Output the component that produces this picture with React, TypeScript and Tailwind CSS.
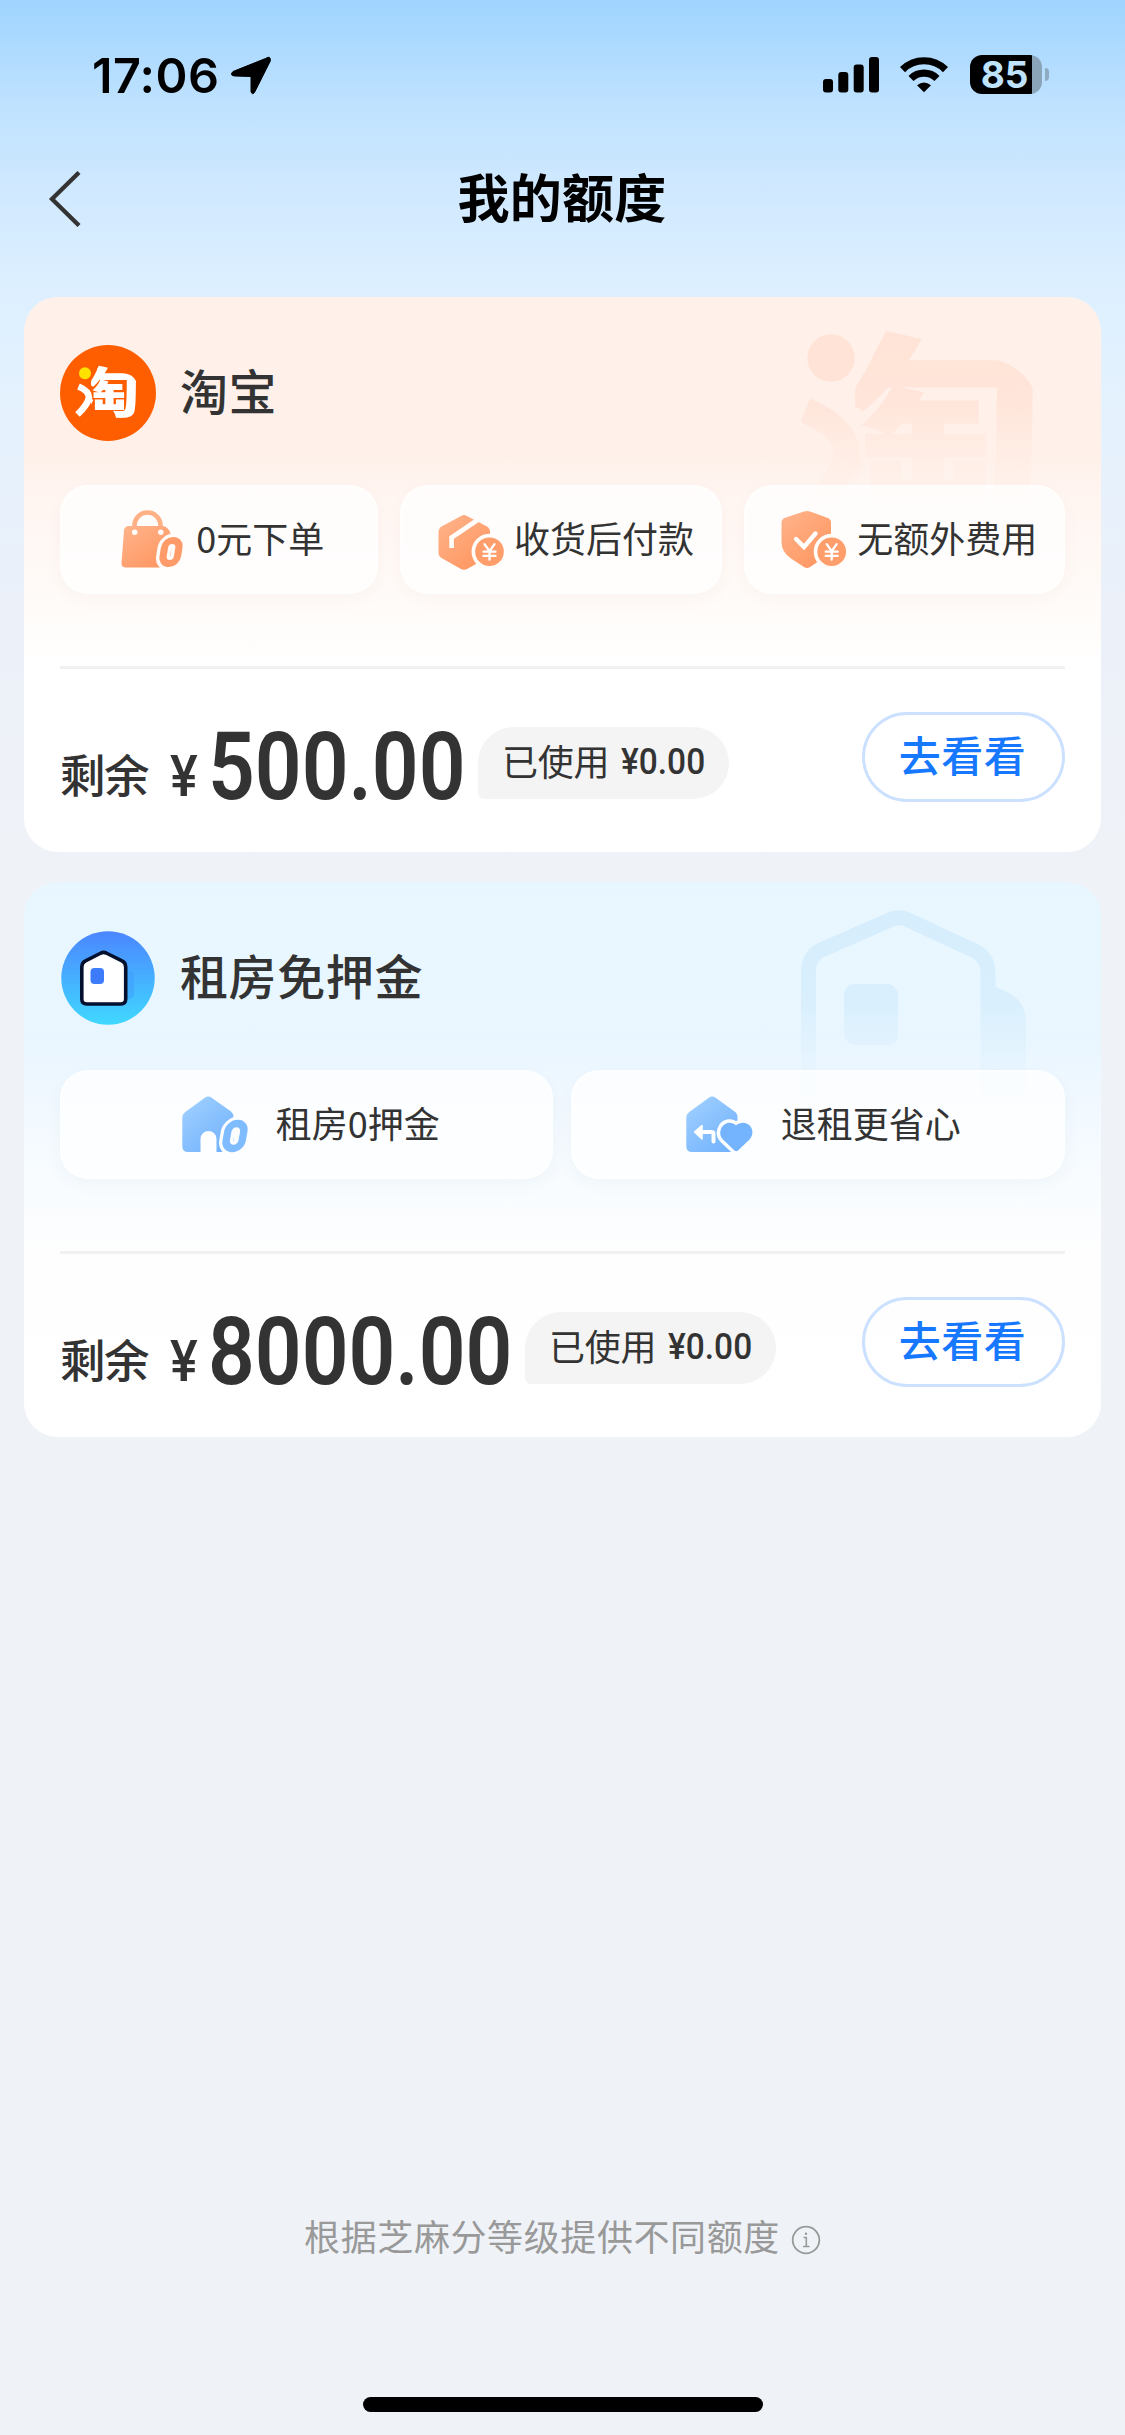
import React from 'react';
import { clsx } from 'clsx';

// Shared between the round logo and the big faded mark on the card
const TaoGlyph = ({ id, fill, dotFill }: { id: string; fill: string; dotFill: string }) => (
  <g>
    <clipPath id={id}>
      <path d="M37 10H62V28Q77.500 29 78 45V67Q78 73 72 73H31V36L34 31L37 25Z" />
    </clipPath>
    <g clipPath={`url(#${id})`}>
      <text x="10.1" y="67.7" transform="scale(1.24 1)" fontSize="54" fontWeight="900" fill={fill} fontFamily='"Noto Sans CJK SC", sans-serif'>淘</text>
    </g>
    <circle cx="25" cy="28.3" r="6" fill={dotFill} />
    <path d="M18.500 41.500Q29 46 29 52.500Q27.500 60 17.500 69.500" fill="none" stroke={fill} strokeWidth="6.500" strokeLinejoin="round" />
  </g>
);

const TaobaoLogo = () => (
  <svg viewBox="0 0 96 96" className="w-24 h-24 shrink-0">
    <circle cx="48" cy="48" r="48" fill="#ff5e00" />
    <TaoGlyph id="taoLogo" fill="#fff" dotFill="#ffe200" />
  </svg>
);

const RentLogo = () => (
  <svg viewBox="0 0 96 96" className="w-24 h-24 shrink-0">
    <defs>
      <linearGradient id="rentLogo" x1="0" y1="0" x2="0" y2="1">
        <stop offset="0" stopColor="#4b86ff" />
        <stop offset="1" stopColor="#40d8ff" />
      </linearGradient>
    </defs>
    <circle cx="48" cy="48" r="46.7" fill="url(#rentLogo)" />
    <rect x="64" y="41" width="10" height="28" rx="5" fill="#3d9cfb" opacity="0.5" />
    <path d="M21.8 37Q21.8 32.5 25.5 30.8L41 23Q43.6 21.8 46.2 23L62 30.8Q65.7 32.5 65.7 37V69Q65.7 74 60.7 74H26.8Q21.8 74 21.8 69Z" fill="#fff" stroke="#03102e" strokeWidth="3.6" />
    <rect x="30.5" y="38" width="13.5" height="16" rx="4" fill="#3c7cfa" />
  </svg>
);

const TaobaoMark = () => (
  <svg viewBox="0 0 96 96" className="absolute left-[708px] top-[-51px] w-[380px] h-[380px] overflow-visible">
    <defs>
      <linearGradient id="taoFade" gradientUnits="userSpaceOnUse" x1="0" y1="20" x2="0" y2="70">
        <stop offset="0" stopColor="#ffe3d6" />
        <stop offset="0.4" stopColor="#ffe5da" />
        <stop offset="0.9" stopColor="#fff1ea" stopOpacity="0.4" />
        <stop offset="1" stopColor="#fff5f1" stopOpacity="0" />
      </linearGradient>
    </defs>
    <TaoGlyph id="taoMark" fill="url(#taoFade)" dotFill="#ffe3d6" />
  </svg>
);

const RentMark = () => (
  <svg viewBox="0 0 240 200" className="absolute left-[769px] top-[22px] w-[240px] h-[200px]">
    <defs>
      <linearGradient id="rentFade" gradientUnits="userSpaceOnUse" x1="0" y1="0" x2="0" y2="200">
        <stop offset="0" stopColor="#d6edfd" />
        <stop offset="0.5" stopColor="#d9effd" />
        <stop offset="1" stopColor="#eaf6ff" stopOpacity="0.4" />
      </linearGradient>
    </defs>
    <path d="M15.5 200V68Q15.5 52 28 46L98 15.500Q106 12 114 15.500L182 47Q195 53 195 70V200" fill="none" stroke="url(#rentFade)" strokeWidth="15" />
    <path d="M202 83Q233 92 233 118V200H202Z" fill="url(#rentFade)" />
    <rect x="51" y="80" width="54" height="61" rx="11" fill="url(#rentFade)" />
  </svg>
);

const OrangeFill = ({ id }: { id: string }) => (
  <defs>
    <linearGradient id={id} x1="0" y1="0" x2="0.8" y2="1">
      <stop offset="0" stopColor="#ffb48c" />
      <stop offset="1" stopColor="#ff9660" />
    </linearGradient>
  </defs>
);

const BlueFill = ({ id }: { id: string }) => (
  <defs>
    <linearGradient id={id} x1="0" y1="0" x2="0.8" y2="1">
      <stop offset="0" stopColor="#a3d2ff" />
      <stop offset="1" stopColor="#72b2fd" />
    </linearGradient>
  </defs>
);

const Coin = ({ cx, cy }: { cx: number; cy: number }) => (
  <g>
    <circle cx={cx} cy={cy} r="18" fill="#fffcfa" />
    <circle cx={cx} cy={cy} r="14.300" fill="#ff9e6b" />
    <path d={`M${cx - 5} ${cy - 7.5}l5 7l5 -7M${cx} ${cy - 0.5}v8.500M${cx - 6} ${cy}h12M${cx - 6} ${cy + 4.2}h12`} fill="none" stroke="#fff" strokeWidth="2.300" strokeLinecap="round" />
  </g>
);

const BagIcon = () => (
  <svg viewBox="0 0 62 60" className="w-[62px] h-[60px]">
    <OrangeFill id="bag" />
    <path d="M13.500 17V15.500a13 13 0 0 1 26 0V17" fill="none" stroke="#ffb084" strokeWidth="4.600" />
    <path d="M8 16H42Q48 17 49.500 24L51 57.500H5Q0.300 57.500 0.500 53L3 20.500Q3.500 16 8 16Z" fill="url(#bag)" />
    <circle cx="13.700" cy="22.300" r="2.700" fill="#fff" />
    <circle cx="39.800" cy="22.300" r="2.700" fill="#fff" />
    <g transform="translate(50 42) skewX(-9)" fill="none">
      <rect x="-7.200" y="-11.500" width="14.400" height="23" rx="7.200" stroke="#fffcfa" strokeWidth="14" />
      <rect x="-7.200" y="-11.500" width="14.400" height="23" rx="7.200" stroke="#ff9b68" strokeWidth="7.200" />
    </g>
  </svg>
);

const BoxIcon = () => (
  <svg viewBox="0 0 68 60" className="w-[68px] h-[60px]">
    <OrangeFill id="box" />
    <path d="M23 6Q26 4 29 6L49 16.500Q52 18.500 52 22V42Q52 46 49 48L29 59Q26 60.500 23 59L3.500 48Q0.500 46 0.500 43V22Q0.500 18.500 3.500 16.500Z" fill="url(#box)" />
    <path d="M13.600 38V27.500L41 9" fill="none" stroke="#fffcfa" strokeWidth="4.600" />
    <Coin cx={51.5} cy={41.7} />
  </svg>
);

const ShieldIcon = () => (
  <svg viewBox="0 0 68 60" className="w-[68px] h-[60px]">
    <OrangeFill id="shield" />
    <path d="M23 1.500Q26 0.300 29 1.500L47 8Q50 9.500 50 12.500V32Q50 43 41 49L29 57Q26 58.800 23 57L10 48.500Q0.500 42 0.500 32V12.500Q0.500 9.500 3.500 8Z" fill="url(#shield)" />
    <path d="M15 29l8 8L34.500 23.500" fill="none" stroke="#fff" strokeWidth="4.300" strokeLinecap="round" />
    <Coin cx={50.7} cy={41.7} />
  </svg>
);

const HouseZeroIcon = () => (
  <svg viewBox="0 0 68 58" className="w-[68px] h-[58px]">
    <BlueFill id="houseZero" />
    <path d="M22.500 2Q26.300 -0.800 30 2L49 15.500Q51.500 17.500 51.500 21V56H34.500V43a8 8 0 0 0 -16 0V56H6Q0.300 56 0.300 50V22Q0.300 18.500 3 16.300Z" fill="url(#houseZero)" />
    <g transform="translate(53 40) skewX(-10)" fill="none">
      <rect x="-8" y="-12.500" width="16" height="25" rx="8" stroke="#fbfdff" strokeWidth="14" />
      <rect x="-8" y="-12.500" width="16" height="25" rx="8" stroke="#7fbbff" strokeWidth="7.400" />
    </g>
  </svg>
);

const HouseHeartIcon = () => (
  <svg viewBox="0 0 68 58" className="w-[68px] h-[58px]">
    <BlueFill id="houseHeart" />
    <path d="M22.500 2Q26.300 -0.800 30 2L48.500 15.500Q51.500 17.500 51.500 21V56H6Q0.300 56 0.300 50V22Q0.300 18.500 3 16.300Z" fill="url(#houseHeart)" />
    <path d="M14 36H25.500Q27.500 36 27.500 38V45.500" fill="none" stroke="#fff" strokeWidth="4" strokeLinecap="round" />
    <path d="M8.500 36L16 29.500V43Z" fill="#fff" stroke="#fff" strokeWidth="1.500" strokeLinejoin="round" />
    <path
      d="M50 29.500C45.500 25 39 26.300 36 31C33 36 34 40.500 37.500 44L48.500 54.500Q50.300 56 52 54.500L63 44C67 40 67.500 35 64.500 30.500C61 26 54.500 25.500 50 29.500Z"
      fill="#74b4ff"
      stroke="#fbfdff"
      strokeWidth="7"
      paintOrder="stroke"
    />
  </svg>
);

interface Feature {
  label: string;
  icon: React.ReactNode;
  gap: string;
}

interface QuotaCardProps {
  title: string;
  logo: React.ReactNode;
  mark: React.ReactNode;
  background: string;
  shadow: string;
  features: Feature[];
  featureGap: string;
  amount: string;
  amountWidth: string;
}

const QuotaCard: React.FC<QuotaCardProps> = ({ title, logo, mark, background, shadow, features, featureGap, amount, amountWidth }) => (
  <section className={clsx('relative h-[555px] rounded-[34px] px-9 pt-12', background)}>
    {mark}
    <div className="relative flex items-center h-24">
      {logo}
      <h2 className="ml-6 text-[48px] leading-[60px] tracking-[0.6px] font-medium text-[#333] -mt-2">{title}</h2>
    </div>

    <div className={clsx('relative flex mt-11', featureGap)}>
      {features.map((item) => (
        <div
          key={item.label}
          className={clsx('flex-1 h-[109px] rounded-[28px] bg-white/75 border-2 border-white/40 flex items-center justify-center', item.gap, shadow)}
        >
          {item.icon}
          <span className="text-[36px] leading-[48px] text-[#333] whitespace-nowrap -mt-[5px]">{item.label}</span>
        </div>
      ))}
    </div>

    <div className="h-[3px] bg-[#f1f1f3] mt-[72px]" />

    <div className="flex items-start text-[#333]">
      <span className="mt-[76px] w-[100px] text-[45.5px] leading-[56px] tracking-[-1.5px] font-medium whitespace-nowrap">剩余</span>
      <span className="mt-[77px] ml-[10px] w-[33px] font-['Roboto'] font-medium text-[58px] leading-[60px] origin-left scale-x-[0.9]">¥</span>
      <span className={clsx('mt-[50px] ml-[5px]', amountWidth)}>
        <span className="inline-block origin-left scale-x-[0.863] font-['Roboto'] font-semibold text-[95px] leading-[95px]">{amount}</span>
      </span>
      <div className="mt-[58px] h-[72px] w-[251px] pl-[24px] flex items-center rounded-[36px] rounded-bl-[6px] bg-[#f4f4f4] text-[36px] whitespace-nowrap">
        <span className="tracking-[-0.3px] -mt-[7px]">已使用</span>
        <span className="ml-[12px] -mt-[2px] inline-block origin-left scale-x-[0.93] font-['Roboto'] font-medium">¥0.00</span>
      </div>
      <button className="mt-[43px] ml-auto w-[203px] h-[90px] rounded-full border-[3px] border-[#cbe1ff] text-[#1677ff] text-[42px] leading-[60px] tracking-[0.5px] font-medium pb-[7px] pr-[2px]">
        去看看
      </button>
    </div>
  </section>
);

const StatusBar = () => (
  <div className="h-[150px] flex items-start pl-[92px] pr-[76px] pt-[55px]">
    <span className="w-[139px] font-['Inter'] font-semibold text-[48.5px] leading-[41px] tracking-[0.4px]">17:06</span>
    <svg viewBox="0 0 40 40" className="w-10 h-10">
      <path d="M34.500 3.500Q40 0 39.300 6L24 36.500Q21.500 41 20 36.500V21.500L4 21Q-2 20.500 2 16.500Z" fill="#000" stroke="#000" strokeWidth="1" strokeLinejoin="round" />
    </svg>
    <div className="flex-1" />
    <svg viewBox="0 0 56 36" className="w-14 h-9 mt-[2px]">
      <rect x="0" y="22" width="10" height="13.500" rx="3" />
      <rect x="15.300" y="15" width="10" height="20.500" rx="3" />
      <rect x="30.700" y="7.500" width="10" height="28" rx="3" />
      <rect x="46" y="0" width="10" height="35.500" rx="3" />
    </svg>
    <svg viewBox="0 0 48 36" className="w-12 h-9 ml-[21px] mt-[2px]" fill="none" stroke="#000" strokeWidth="7.200">
      <path d="M2.500 12.600a30.500 30.500 0 0 1 43 0" />
      <path d="M11 21.500a18.500 18.500 0 0 1 26 0" />
      <path d="M24 35.300L17 28.300Q24 22.500 31 28.300Z" fill="#000" stroke="none" />
    </svg>
    <div className="ml-[22px] flex items-center">
      <div className="w-[72px] h-[39px] rounded-[12px] pr-[3px] bg-[linear-gradient(90deg,#000_0,#000_62px,#8aa5b8_62px)] flex items-center justify-center">
        <span className="font-['Inter'] font-bold text-[37px] leading-[39px] text-[#bfe2fd]">85</span>
      </div>
      <div className="ml-[3px] w-[4px] h-[13px] rounded-r-full bg-[#8fabc0]" />
    </div>
  </div>
);

const cards: QuotaCardProps[] = [
  {
    title: '淘宝',
    logo: <TaobaoLogo />,
    mark: <TaobaoMark />,
    background: 'bg-[linear-gradient(180deg,#fff1e9_0px,#fff1ea_160px,#fff5f1_200px,#fffaf7_290px,#ffffff_372px)]',
    shadow: 'shadow-[0_6px_18px_rgba(120,60,30,0.03)]',
    features: [
      { label: '0元下单', icon: <BagIcon />, gap: 'gap-[13px] pl-[7px]' },
      { label: '收货后付款', icon: <BoxIcon />, gap: 'gap-[8px] pl-[10px]' },
      { label: '无额外费用', icon: <ShieldIcon />, gap: 'gap-[8px] pl-[10px]' },
    ],
    featureGap: 'gap-[22px]',
    amount: '500.00',
    amountWidth: 'w-[270px]',
  },
  {
    title: '租房免押金',
    logo: <RentLogo />,
    mark: <RentMark />,
    background: 'bg-[linear-gradient(180deg,#e8f7ff_0px,#e9f6ff_160px,#f0f8ff_210px,#f8fcff_300px,#fefefe_375px,#ffffff_100%)]',
    shadow: 'shadow-[0_6px_18px_rgba(30,70,110,0.04)]',
    features: [
      { label: '租房0押金', icon: <HouseZeroIcon />, gap: 'gap-[26px] pl-[9px]' },
      { label: '退租更省心', icon: <HouseHeartIcon />, gap: 'gap-[27px] pl-[11px]' },
    ],
    featureGap: 'gap-[18px]',
    amount: '8000.00',
    amountWidth: 'w-[317px]',
  },
];

const App: React.FC = () => {
  return (
    <div className="w-[1125px] h-[2435px] flex flex-col text-black font-['Noto_Sans_CJK_SC',sans-serif] bg-[linear-gradient(180deg,#9fd4ff_0px,#bfe2ff_105px,#d3eaff_210px,#def0ff_300px,#e4f2fe_400px,#ebf0f9_600px,#eef2f8_760px,#eff3f8_900px)]">
      <StatusBar />

      <nav className="h-[98px] flex items-center px-[48px]">
        <svg viewBox="0 0 34 56" className="w-[34px] h-14">
          <path d="M31 1.500L4 28L31 54.500" fill="none" stroke="#333" strokeWidth="4.300" />
        </svg>
        <h1 className="flex-1 text-center pr-[35px] text-[52px] leading-[60px] tracking-[0.3px] font-bold -mt-[6px]">我的额度</h1>
      </nav>

      <main className="mt-[49px] px-6 flex flex-col gap-[30px]">
        {cards.map((card) => (
          <QuotaCard key={card.title} {...card} />
        ))}
      </main>

      <footer className="mt-auto flex flex-col items-center pb-[23px]">
        <div className="flex items-center text-[#999] mb-[135px]">
          <span className="text-[36px] leading-[54px] tracking-[0.6px]">根据芝麻分等级提供不同额度</span>
          <svg viewBox="0 0 30 30" className="w-[30px] h-[30px] ml-[11px] mt-[9px]" fill="none" stroke="#999" strokeWidth="1.800">
            <circle cx="15" cy="15" r="13.300" />
            <path d="M12.500 12.500H15.300V21.500M12 21.500H18.500" strokeWidth="1.600" />
            <circle cx="15" cy="8.700" r="1.200" fill="#999" stroke="none" />
          </svg>
        </div>
        <div className="w-[400px] h-[15px] rounded-full bg-black" />
      </footer>
    </div>
  );
};

export default App;
